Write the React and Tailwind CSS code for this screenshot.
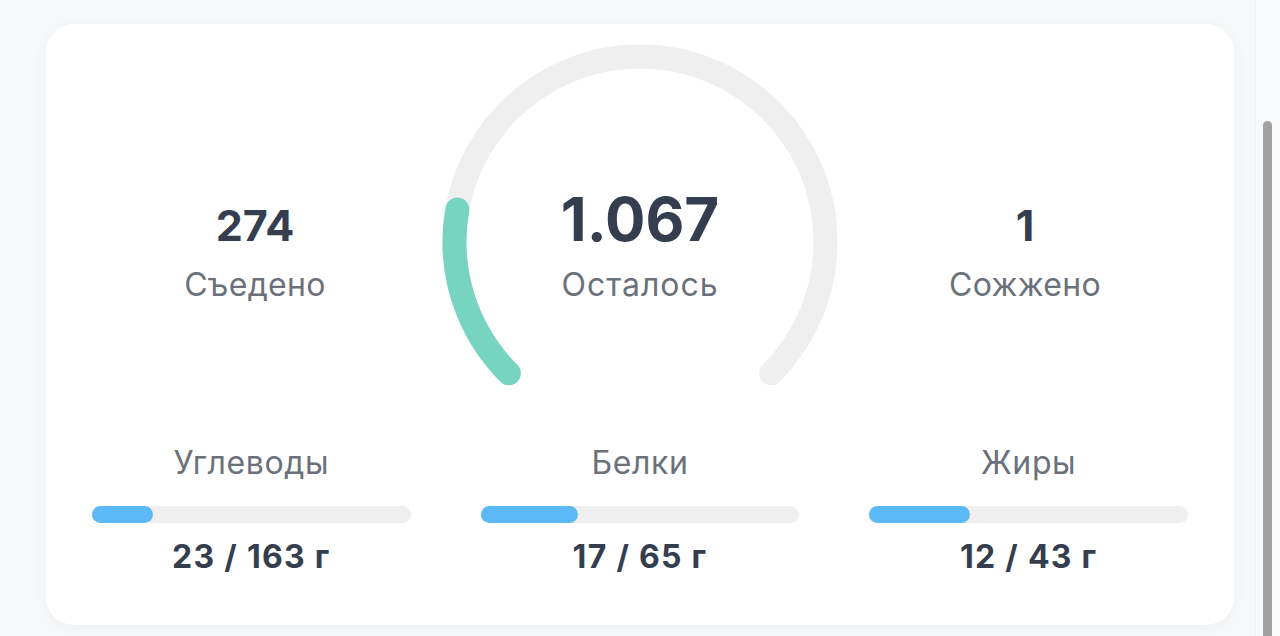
import React from 'react';

const stats = {
  eaten: 274,
  left: '1.067',
  burned: 1,
  progress: 0.204, // доля съеденного от дневной нормы
};

const macros = [
  { name: 'Углеводы', value: 23, goal: 163, fill: 61 },
  { name: 'Белки', value: 17, goal: 65, fill: 97 },
  { name: 'Жиры', value: 12, goal: 43, fill: 101 },
];

// точка на окружности по углу в градусах (0° — вправо, по часовой)
const polar = (cx, cy, r, deg) => {
  const rad = (deg * Math.PI) / 180;
  return [cx + r * Math.cos(rad), cy + r * Math.sin(rad)];
};

const arcPath = (cx, cy, r, from, to) => {
  const [x1, y1] = polar(cx, cy, r, from);
  const [x2, y2] = polar(cx, cy, r, to);
  const large = to - from > 180 ? 1 : 0;
  return `M ${x1} ${y1} A ${r} ${r} 0 ${large} 1 ${x2} ${y2}`;
};

const Gauge = ({ progress }) => {
  const start = 135;
  const sweep = 270;
  return (
    <svg width="400" height="360" viewBox="0 0 400 360" className="block">
      <path
        d={arcPath(200, 200, 185.5, start, start + sweep)}
        fill="none"
        stroke="#efefef"
        strokeWidth="24"
        strokeLinecap="round"
      />
      <path
        d={arcPath(200, 200, 185.5, start, start + sweep * progress)}
        fill="none"
        stroke="#76d4c1"
        strokeWidth="24"
        strokeLinecap="round"
      />
    </svg>
  );
};

const SideStat = ({ value, label }) => (
  <div className="flex flex-col items-center pt-[159px]">
    <span className="text-[43px] leading-[48px] font-bold text-[#343e4e]">{value}</span>
    <span className="mt-[16px] text-[32px] leading-[40px] tracking-[0.01em] text-[#6b717b]">{label}</span>
  </div>
);

const MacroBar = ({ name, value, goal, fill }) => (
  <div className="flex flex-col items-center">
    <span className="text-[32px] leading-[36px] tracking-[0.02em] text-[#6b717b]">{name}</span>
    <div className="mt-[25px] h-[17px] w-full rounded-full bg-[#efefef]">
      <div className="h-full rounded-full bg-[#5bb9f5]" style={{ width: fill }} />
    </div>
    <span className="mt-[16px] text-[32px] leading-[36px] font-bold tracking-[0.04em] text-[#343e4e]">
      {value} / {goal} г
    </span>
  </div>
);

export default function App() {
  return (
    <div
      className="flex h-[636px] w-full overflow-hidden bg-[#f7f8fa]"
      style={{ fontFamily: 'Inter, "Noto Sans", sans-serif' }}
    >
      <div className="flex-1 pl-[46px] pr-[21px] pt-[24px]">
        <div className="rounded-[28px] bg-white shadow-[0_2px_18px_rgba(0,0,0,0.04)] pb-[50px] pt-[18px]">
          <div className="grid grid-cols-[1fr_400px_1fr] px-[24px]">
            <SideStat value={stats.eaten} label="Съедено" />
            <div className="grid">
              <div className="col-start-1 row-start-1">
                <Gauge progress={stats.progress} />
              </div>
              <div className="col-start-1 row-start-1 flex flex-col items-center pt-[143px]">
                <span className="text-[60px] leading-[68px] font-bold text-[#343e4e]">{stats.left}</span>
                <span className="mt-[12px] text-[32px] leading-[40px] tracking-[0.03em] text-[#6b717b]">Осталось</span>
              </div>
            </div>
            <SideStat value={stats.burned} label="Сожжено" />
          </div>

          <div className="mt-[43px] grid grid-cols-3 gap-[70px] px-[46px]">
            {macros.map((m) => (
              <MacroBar key={m.name} {...m} />
            ))}
          </div>
        </div>
      </div>

      {/* полоса прокрутки */}
      <div className="w-[25px] border-l border-[#f0f1f3] bg-[#f8f9fa] pl-[7px] pt-[121px]">
        <div className="h-full w-[9px] rounded-t-full bg-[#a1a1a1]" />
      </div>
    </div>
  );
}
